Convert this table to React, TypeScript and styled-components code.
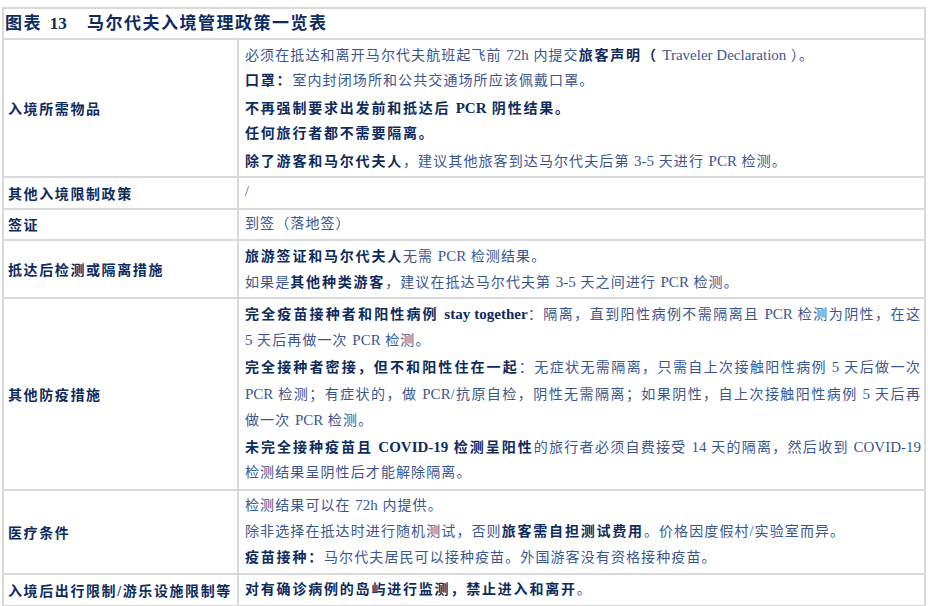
import React from "react";
import styled, { createGlobalStyle } from "styled-components";

const Global = createGlobalStyle`
  html, body { margin: 0; padding: 0; background: #ffffff; }
  body { font-family: "Liberation Serif", "Noto Sans CJK SC", serif; }
`;

const Table = styled.div`
  box-sizing: border-box;
  margin: 7px 0 0 2px;
  width: 924px;
  display: grid;
  grid-template-columns: 233px 1fr;
  gap: 2px;
  padding: 2px;
  background: #d9d9d9;
`;

const Title = styled.div`
  grid-column: 1 / -1;
  background: #ffffff;
  height: 29px;
  line-height: 29px;
  padding-left: 1px;
  font-size: 17px;
  font-weight: 700;
  letter-spacing: 1.5px;
  color: #0e2b5e;
  white-space: pre;
`;

const TitleNum = styled.span`
  letter-spacing: 0;
  margin: 0 3px 0 2px;
`;

const Label = styled.div`
  background: #ffffff;
  display: flex;
  align-items: center;
  padding: 0 0 0 4px;
  font-size: 14px;
  font-weight: 700;
  letter-spacing: 1.6px;
  color: #0e2b5e;
  white-space: nowrap;
`;

const Content = styled.div`
  background: #ffffff;
  padding: 1.5px 3px 1.5px 6px;
  font-size: 14px;
  color: #3a5690;
  letter-spacing: 1.1px;
`;

const Line = styled.div<{ $justify?: boolean }>`
  line-height: 26.6px;
  height: 26.6px;
  white-space: nowrap;
  text-align: ${(p) => (p.$justify ? "justify" : "left")};
  text-align-last: ${(p) => (p.$justify ? "justify" : "auto")};
`;

const Strong = styled.span`
  font-weight: 700;
  color: #0e2b5e;
  letter-spacing: 1.8px;
`;

const Lat = styled.span`
  letter-spacing: 0;
  font-size: 15px;
`;

const LATIN = /([A-Za-z0-9][A-Za-z0-9 .\-\/]*[A-Za-z0-9.]|[A-Za-z0-9])/g;

function mix(s: string) {
  return s.split(LATIN).map((part, i) =>
    i % 2 ? <Lat key={i}>{part}</Lat> : <React.Fragment key={i}>{part}</React.Fragment>
  );
}

const N = ({ t }: { t: string }) => <>{mix(t)}</>;
const B = ({ t }: { t: string }) => <Strong>{mix(t)}</Strong>;

export default function App() {
  return (
    <>
      <Global />
      <Table>
        <Title>
          图表 <TitleNum>13</TitleNum>{"   "}马尔代夫入境管理政策一览表
        </Title>

        <Label>入境所需物品</Label>
        <Content>
          <Line>
            <N t="必须在抵达和离开马尔代夫航班起飞前 72h 内提交" />
            <B t="旅客声明（" />
            <N t=" Traveler Declaration ）。" />
          </Line>
          <Line>
            <B t="口罩：" />
            <N t="室内封闭场所和公共交通场所应该佩戴口罩。" />
          </Line>
          <Line>
            <B t="不再强制要求出发前和抵达后 PCR 阴性结果。" />
          </Line>
          <Line>
            <B t="任何旅行者都不需要隔离。" />
          </Line>
          <Line>
            <B t="除了游客和马尔代夫人" />
            <N t="，建议其他旅客到达马尔代夫后第 3-5 天进行 PCR 检测。" />
          </Line>
        </Content>

        <Label>其他入境限制政策</Label>
        <Content>
          <Line>
            <N t="/" />
          </Line>
        </Content>

        <Label>签证</Label>
        <Content>
          <Line>
            <N t="到签（落地签）" />
          </Line>
        </Content>

        <Label>抵达后检测或隔离措施</Label>
        <Content>
          <Line>
            <B t="旅游签证和马尔代夫人" />
            <N t="无需 PCR 检测结果。" />
          </Line>
          <Line>
            <N t="如果是" />
            <B t="其他种类游客" />
            <N t="，建议在抵达马尔代夫第 3-5 天之间进行 PCR 检测。" />
          </Line>
        </Content>

        <Label>其他防疫措施</Label>
        <Content>
          <Line $justify>
            <B t="完全疫苗接种者和阳性病例 stay together" />
            <N t="：隔离，直到阳性病例不需隔离且 PCR 检测为阴性，在这" />
          </Line>
          <Line>
            <N t="5 天后再做一次 PCR 检测。" />
          </Line>
          <Line $justify>
            <B t="完全接种者密接，但不和阳性住在一起" />
            <N t="：无症状无需隔离，只需自上次接触阳性病例 5 天后做一次" />
          </Line>
          <Line $justify>
            <N t="PCR 检测；有症状的，做 PCR/抗原自检，阴性无需隔离；如果阴性，自上次接触阳性病例 5 天后再" />
          </Line>
          <Line>
            <N t="做一次 PCR 检测。" />
          </Line>
          <Line $justify>
            <B t="未完全接种疫苗且 COVID-19 检测呈阳性" />
            <N t="的旅行者必须自费接受 14 天的隔离，然后收到 COVID-19" />
          </Line>
          <Line>
            <N t="检测结果呈阴性后才能解除隔离。" />
          </Line>
        </Content>

        <Label>医疗条件</Label>
        <Content>
          <Line>
            <N t="检测结果可以在 72h 内提供。" />
          </Line>
          <Line>
            <N t="除非选择在抵达时进行随机测试，否则" />
            <B t="旅客需自担测试费用" />
            <N t="。价格因度假村/实验室而异。" />
          </Line>
          <Line>
            <B t="疫苗接种：" />
            <N t="马尔代夫居民可以接种疫苗。外国游客没有资格接种疫苗。" />
          </Line>
        </Content>

        <Label>入境后出行限制/游乐设施限制等</Label>
        <Content>
          <Line>
            <B t="对有确诊病例的岛屿进行监测，禁止进入和离开" />
            <N t="。" />
          </Line>
        </Content>
      </Table>
    </>
  );
}
